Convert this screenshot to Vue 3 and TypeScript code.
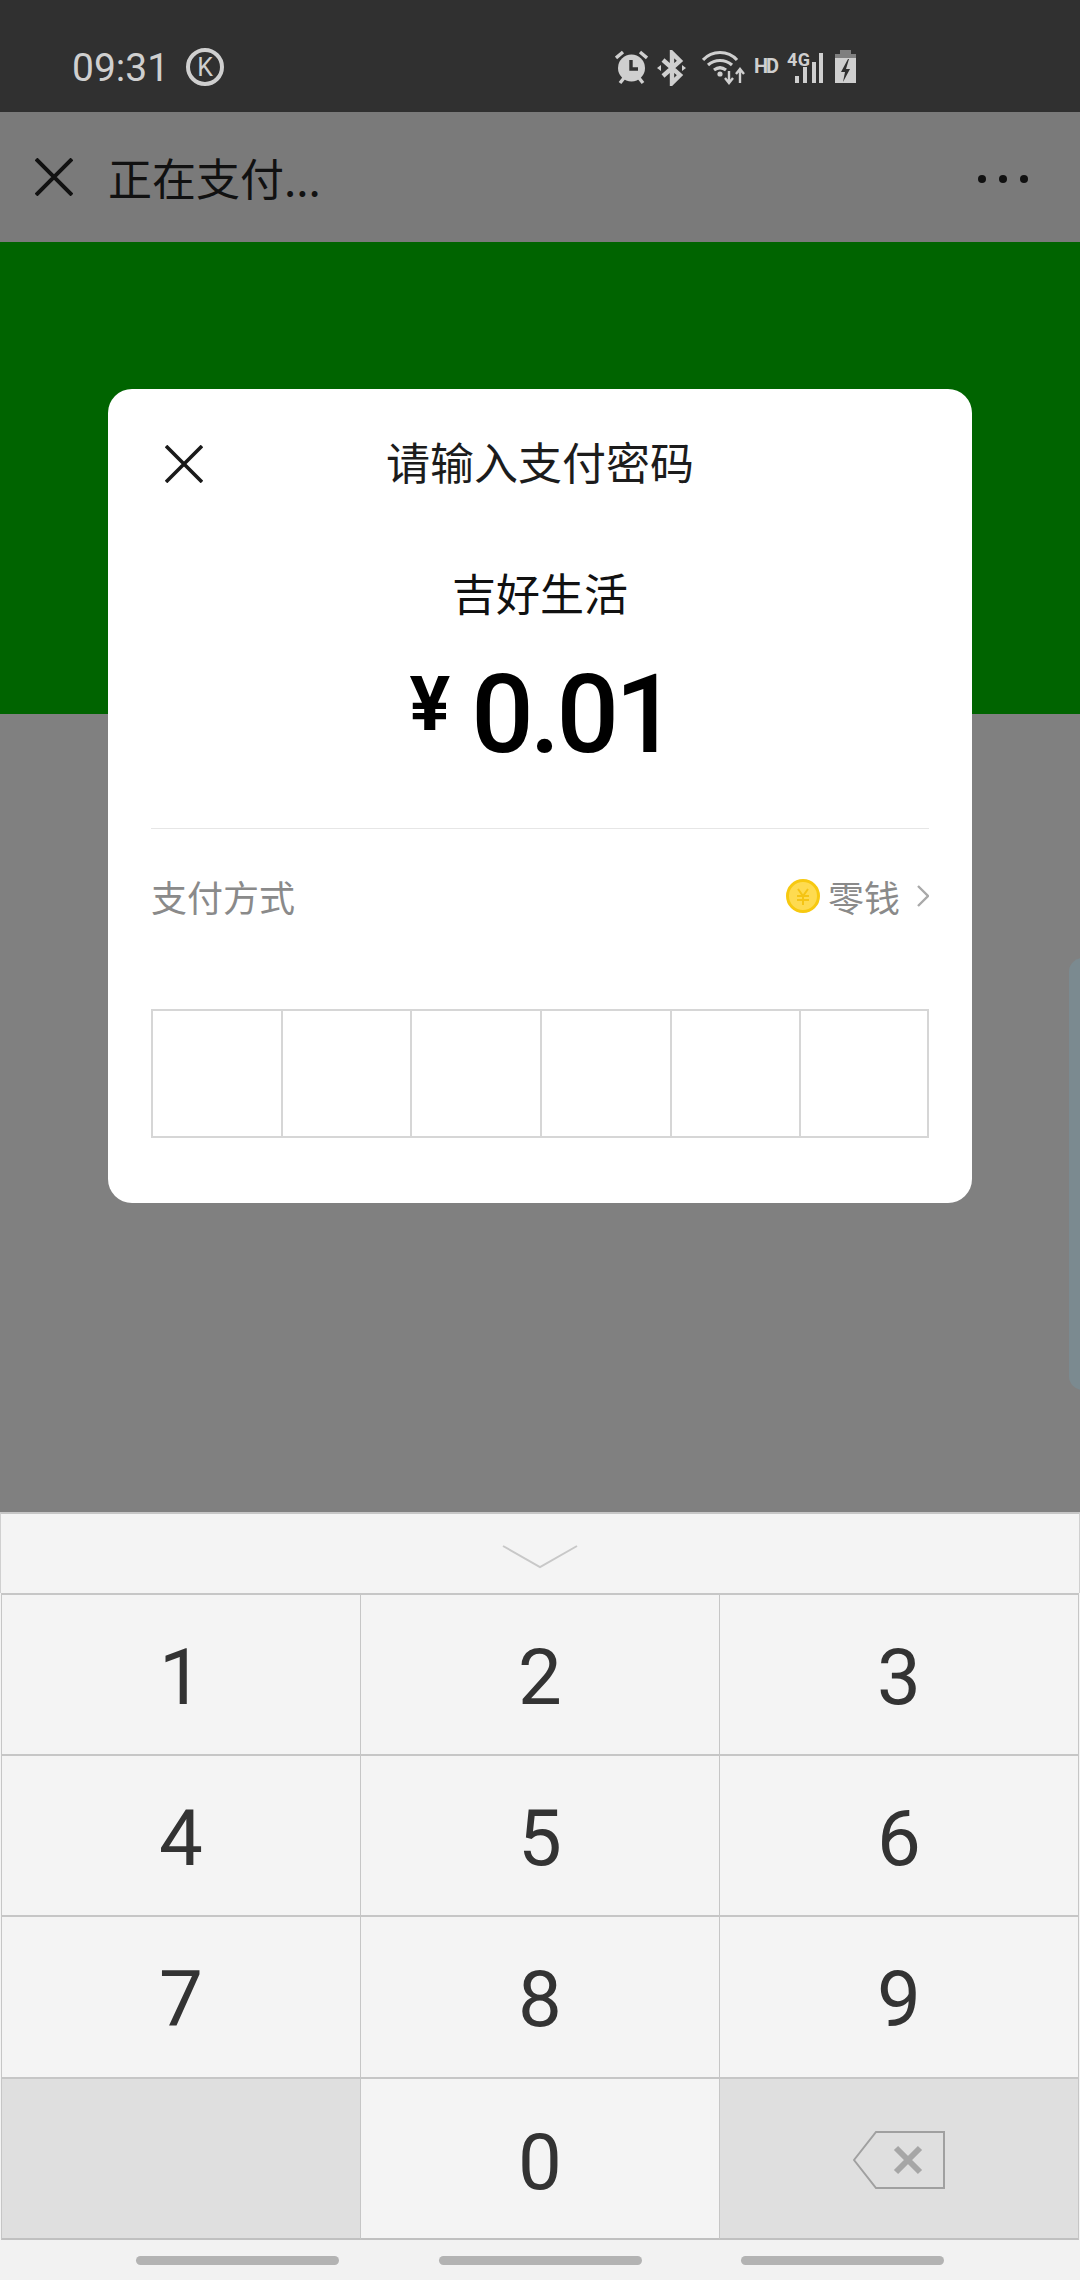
<script setup lang="ts">
const digits = ['1', '2', '3', '4', '5', '6', '7', '8', '9']
const pinCells = 6
</script>

<template>
  <div class="page">
    <header class="status">
      <span class="time">09:31</span>
      <span class="k-badge">K</span>
      <div class="status-icons">
        <!-- alarm -->
        <svg width="33" height="36" viewBox="0 0 33 36">
          <circle cx="16.5" cy="18" r="13.5" fill="#cfcfcf" />
          <path d="M16 10v9h7" fill="none" stroke="#303030" stroke-width="3.4" />
          <path d="M1 8l7-6M32 8l-7-6M5 33l4-5M28 33l-4-5" stroke="#cfcfcf" stroke-width="3.4" fill="none" />
        </svg>
        <!-- bluetooth -->
        <svg class="ml-9" width="29" height="36" viewBox="0 0 29 36">
          <path d="M6 10l17 15-8 8V3l8 8L6 26" fill="none" stroke="#cfcfcf" stroke-width="4.4" />
          <path d="M0 18l4-3v6zM29 18l-4-3v6z" fill="#cfcfcf" />
        </svg>
        <!-- wifi with up/down arrows -->
        <svg class="ml-16" width="43" height="36" viewBox="0 0 43 36">
          <path d="M1 10C10 0 26 0 35 10M6 15c7-6 17-6 24 0M12 20c4-3 8-3 12 0" fill="none" stroke="#cfcfcf" stroke-width="3.2" />
          <circle cx="18" cy="24" r="2.6" fill="#cfcfcf" />
          <path d="M27 21v11M23 28l4 5 4-5M38 33V19M34 24l4-5 4 5" fill="none" stroke="#cfcfcf" stroke-width="2.4" />
        </svg>
        <!-- HD -->
        <svg class="ml-9" width="25" height="36" viewBox="0 0 25 36">
          <text class="hd" x="0" y="23" textLength="25">HD</text>
        </svg>
        <!-- 4G + signal -->
        <svg class="ml-8" width="36" height="36" viewBox="0 0 36 36">
          <text class="tiny" x="0" y="16" textLength="23">4G</text>
          <g fill="#cfcfcf">
            <rect x="8" y="26" width="4" height="7" />
            <rect x="16" y="17" width="4" height="16" />
            <rect x="25" y="12" width="4" height="21" />
            <rect x="32" y="3" width="4" height="30" />
          </g>
        </svg>
        <!-- battery -->
        <svg class="ml-12" width="21" height="36" viewBox="0 0 21 36">
          <path d="M5 0h11v4h5v8H0V4h5z" fill="#7f7f7f" />
          <path d="M0 8h21v25H0z" fill="#cfcfcf" />
          <path d="M13 9l-7 13h4l-2 10 7-13h-4l3-10z" fill="#303030" />
        </svg>
      </div>
    </header>

    <div class="topbar">
      <svg class="x-icon" width="38" height="38" viewBox="0 0 38 38">
        <path d="M1 1l36 36M37 1L1 37" stroke="#111" stroke-width="4" fill="none" />
      </svg>
      <span class="topbar-title">正在支付...</span>
      <div class="dots"><i></i><i></i><i></i></div>
    </div>

    <main class="content">
      <div class="banner"></div>
      <div class="side-panel"></div>

      <section class="dialog">
        <div class="dialog-head">
          <svg class="dialog-close" width="38" height="38" viewBox="0 0 38 38">
            <path d="M1 1l36 36M37 1L1 37" stroke="#1a1a1a" stroke-width="3.6" fill="none" />
          </svg>
          <h2 class="dialog-title">请输入支付密码</h2>
        </div>
        <div class="merchant">吉好生活</div>
        <div class="amount"><span class="yen">¥</span><span class="sum">0.01</span></div>
        <div class="method">
          <span>支付方式</span>
          <div class="method-value">
            <svg width="34" height="34" viewBox="0 0 34 34">
              <circle cx="17" cy="17" r="15.5" fill="#fedb50" stroke="#f7c910" stroke-width="3" />
              <path d="M12 10l5 7 5-7M11 17h12M11 21h12M17 17v9" fill="none" stroke="#f5c414" stroke-width="2" />
            </svg>
            <span class="method-name">零钱</span>
            <svg width="12" height="22" viewBox="0 0 12 22">
              <path d="M1 1l10 10L1 21" fill="none" stroke="#a9a9a9" stroke-width="2.4" />
            </svg>
          </div>
        </div>
        <div class="pin">
          <div v-for="n in pinCells" :key="n" class="pin-cell"></div>
        </div>
      </section>
    </main>

    <div class="keyboard">
      <div class="kb-toggle">
        <svg width="76" height="24" viewBox="0 0 76 24">
          <path d="M1 1l37 21L75 1" fill="none" stroke="#c8c8c8" stroke-width="2" />
        </svg>
      </div>
      <div class="kb-grid">
        <button v-for="d in digits" :key="d" class="key" type="button">{{ d }}</button>
        <div class="key key-dark"></div>
        <button class="key key-zero" type="button">0</button>
        <button class="key key-dark key-back" type="button">
          <svg width="92" height="58" viewBox="0 0 92 58">
            <path d="M23 1h68v56H23L1 29z" fill="none" stroke="#a0a0a0" stroke-width="2" />
            <path d="M43 17l24 24M67 17L43 41" stroke="#a6a6a6" stroke-width="6" fill="none" />
          </svg>
        </button>
      </div>
    </div>

    <nav class="navbar"><i></i><i></i><i></i></nav>
  </div>
</template>

<style scoped>
.page {
  width: 1080px;
  height: 2280px;
  display: flex;
  flex-direction: column;
  overflow: hidden;
  font-family: "Noto Sans CJK SC", Roboto, sans-serif;
}

.status {
  height: 112px;
  flex: none;
  box-sizing: border-box;
  display: flex;
  align-items: flex-start;
  padding: 50px 224px 0 72px;
  background: #303030;
  color: #cfcfcf;
}
.time {
  font: 400 39px/36px Roboto, sans-serif;
}
.k-badge {
  width: 38px;
  height: 38px;
  box-sizing: border-box;
  margin: -2px 0 0 17px;
  border: 4px solid #cfcfcf;
  border-radius: 50%;
  display: flex;
  align-items: center;
  justify-content: center;
  font: 400 25px/1 Roboto, sans-serif;
}
.status-icons {
  margin-left: auto;
  display: flex;
}
.ml-8 { margin-left: 8px; }
.ml-9 { margin-left: 9px; }
.ml-12 { margin-left: 12px; }
.ml-16 { margin-left: 16px; }
.tiny {
  font: 700 18px Roboto, sans-serif;
  fill: #cfcfcf;
}
.hd {
  font: 700 20px Roboto, sans-serif;
  fill: #cfcfcf;
}

.topbar {
  height: 130px;
  flex: none;
  box-sizing: border-box;
  display: flex;
  align-items: center;
  padding: 0 52px 0 35px;
  background: #7a7a7a;
  color: #111;
}
.topbar-title {
  margin-left: 35px;
  font-size: 44px;
}
.dots {
  margin-left: auto;
  margin-top: 3px;
  display: flex;
  gap: 13px;
}
.dots i {
  width: 8px;
  height: 8px;
  border-radius: 50%;
  background: #111;
}

.content {
  flex: 1;
  position: relative;
  background: #808080;
}
.banner {
  height: 472px;
  background: #006400;
}
.side-panel {
  position: absolute;
  left: 1069px;
  top: 716px;
  width: 30px;
  height: 432px;
  border-radius: 14px;
  background: #7b8a90;
}

.dialog {
  position: absolute;
  left: 108px;
  top: 147px;
  width: 864px;
  height: 814px;
  box-sizing: border-box;
  padding: 0 43px;
  border-radius: 24px;
  background: #fff;
  color: #111;
}
.dialog-head {
  height: 144px;
  display: flex;
  align-items: center;
  position: relative;
}
.dialog-close {
  position: absolute;
  left: 14px;
  top: 56px;
}
.dialog-title {
  width: 100%;
  margin: 0;
  text-align: center;
  font-size: 44px;
  font-weight: 400;
  color: #1c1c1c;
}
.merchant {
  margin-top: 29px;
  height: 60px;
  line-height: 60px;
  text-align: center;
  font-size: 44px;
}
.amount {
  height: 207px;
  box-sizing: border-box;
  padding-top: 29px;
  border-bottom: 1px solid #e6e6e6;
  display: flex;
  justify-content: center;
  align-items: flex-start;
  color: #000;
  font-family: Roboto, sans-serif;
  font-weight: 500;
}
.yen {
  margin: 15px 0 0 3px;
  font-size: 76px;
  line-height: 76px;
  font-weight: 700;
}
.sum {
  margin-left: 21px;
  font-size: 110px;
  line-height: 128px;
  letter-spacing: -4px;
}
.method {
  height: 138px;
  box-sizing: border-box;
  padding-bottom: 5px;
  display: flex;
  justify-content: space-between;
  align-items: center;
  font-size: 36px;
  color: #8a8a8a;
}
.method-value {
  display: flex;
  align-items: center;
}
.method-name {
  margin: 0 17px 0 8px;
}
.pin {
  margin-top: 42px;
  height: 129px;
  box-sizing: border-box;
  display: grid;
  grid-template-columns: repeat(6, 1fr);
  border-top: 2px solid #d6d6d6;
  border-bottom: 2px solid #d6d6d6;
}
.pin-cell {
  border-left: 2px solid #d6d6d6;
}
.pin-cell:last-child {
  border-right: 2px solid #d6d6d6;
}

.keyboard {
  flex: none;
  background: #f4f4f4;
}
.kb-toggle {
  height: 81px;
  box-sizing: border-box;
  border-top: 2px solid #c6c6c6;
  border-left: 1px solid #d0d0d0;
  border-right: 1px solid #d0d0d0;
  display: flex;
  justify-content: center;
  padding-top: 31px;
}
.kb-grid {
  display: grid;
  grid-template-columns: 359px 359px 360px;
  grid-template-rows: 161px 161px 162px 163px;
  padding: 0 1px;
  width: 1080px;
  box-sizing: border-box;
}
.key {
  appearance: none;
  padding: 6px 0 0;
  box-sizing: border-box;
  display: flex;
  align-items: center;
  justify-content: center;
  background: #f4f4f4;
  border: 0;
  border-top: 2px solid #c6c6c6;
  border-left: 1px solid #c6c6c6;
  font: 400 78px/1 Roboto, sans-serif;
  color: #333;
}
.key:nth-child(3n) {
  border-right: 1px solid #c6c6c6;
}
.key:nth-last-child(-n + 3) {
  border-bottom: 2px solid #c0c0c0;
}
.key-zero {
  padding-top: 8px;
}
.key-dark {
  background: #dfdfdf;
}
.key-back {
  padding-top: 3px;
}

.navbar {
  height: 40px;
  flex: none;
  box-sizing: border-box;
  padding: 16px 136px 0;
  display: flex;
  justify-content: space-between;
  background: #f2f2f2;
}
.navbar i {
  width: 203px;
  height: 9px;
  border-radius: 5px;
  background: #b3b3b3;
}
</style>
